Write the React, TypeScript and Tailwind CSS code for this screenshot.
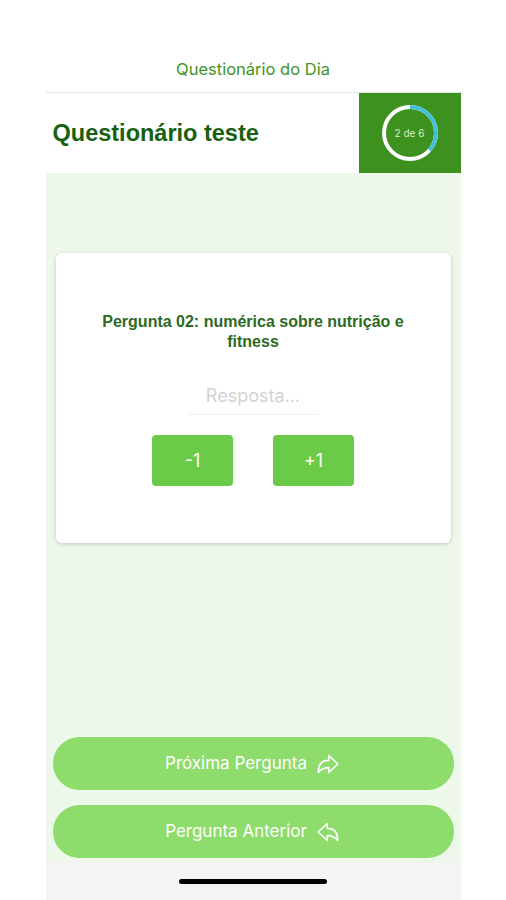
import { IoArrowRedoOutline, IoArrowUndoOutline } from "react-icons/io5";

const sf = { fontFamily: "Inter, 'Noto Sans', sans-serif" };
const helv = { fontFamily: "'Liberation Sans', Arial, sans-serif" };

function ProgressRing({ current, total }: { current: number; total: number }) {
  const r = 26;
  const c = 2 * Math.PI * r;
  const frac = current / total + 0.03;
  return (
    <div className="relative flex h-[60px] w-[60px] items-center justify-center">
      <svg width="60" height="60" viewBox="0 0 60 60" className="absolute inset-0 -rotate-90">
        <circle cx="30" cy="30" r={r} fill="none" stroke="#ffffff" strokeWidth="4" />
        <circle
          cx="30"
          cy="30"
          r={r}
          fill="none"
          stroke="#44bfdc"
          strokeWidth="4"
          strokeDasharray={`${c * frac} ${c}`}
        />
      </svg>
      <span className="relative text-[10px] text-[#d6efc9]" style={sf}>
        {current} de {total}
      </span>
    </div>
  );
}

export default function App() {
  return (
    <div className="h-[900px] w-full bg-white">
      <div className="mx-auto flex h-full w-[415px] flex-col">
        {/* nav header */}
        <div className="flex h-[93px] shrink-0 items-end justify-center border-b border-[#e6e6e6] pb-[10px]">
          <span className="text-[16.5px] text-[#3f9424]" style={sf}>
            Questionário do Dia
          </span>
        </div>

        {/* title row */}
        <div className="flex h-[80px] shrink-0 items-center pt-[2px]">
          <h1 className="flex-1 pl-[7px] text-[23.5px] font-bold text-[#17600f]" style={helv}>
            Questionário teste
          </h1>
          <div className="-mt-[2px] flex h-[80px] w-[102px] items-center justify-center bg-[#3d911e]">
            <ProgressRing current={2} total={6} />
          </div>
        </div>

        {/* content */}
        <div className="flex flex-1 flex-col bg-[#edf8ea]">
          <div className="mx-[10px] mt-[80px] flex h-[290px] flex-col items-center rounded-[6px] bg-white px-[30px] pt-[59px] shadow-[0_1px_4px_rgba(0,0,0,0.18)]">
            <p className="text-center text-[16px] font-bold leading-[20px] text-[#2d6a1f]" style={helv}>
              Pergunta 02: numérica sobre nutrição e fitness
            </p>
            <div className="mt-[30px] flex w-[130px] justify-center border-b border-[#efefef] pb-[5px]">
              <span className="text-[18px] text-[#d2d2d2]" style={sf}>
                Resposta...
              </span>
            </div>
            <div className="mt-[20px] flex gap-[40px]">
              <button className="flex h-[51px] w-[81px] items-center justify-center rounded-[4px] bg-[#6bcb48] text-[18px] text-white" style={sf}>
                -1
              </button>
              <button className="flex h-[51px] w-[81px] items-center justify-center rounded-[4px] bg-[#6bcb48] text-[18px] text-white" style={sf}>
                +1
              </button>
            </div>
          </div>

          <div className="flex-1" />

          <div className="flex flex-col gap-[15px] px-[7px] pb-[4px]">
            <button className="flex h-[53px] w-full items-center justify-center gap-[8px] rounded-full bg-[#8edc6c] text-[17px] text-white" style={sf}>
              Próxima Pergunta
              <IoArrowRedoOutline className="h-[26px] w-[26px]" />
            </button>
            <button className="flex h-[53px] w-full items-center justify-center gap-[8px] rounded-full bg-[#8edc6c] text-[17px] text-white" style={sf}>
              Pergunta Anterior
              <IoArrowUndoOutline className="h-[26px] w-[26px]" />
            </button>
          </div>
        </div>

        {/* home indicator */}
        <div className="flex h-[38px] shrink-0 items-center justify-center bg-[#f4f5f3]">
          <div className="h-[5px] w-[148px] rounded-full bg-black" />
        </div>
      </div>
    </div>
  );
}
